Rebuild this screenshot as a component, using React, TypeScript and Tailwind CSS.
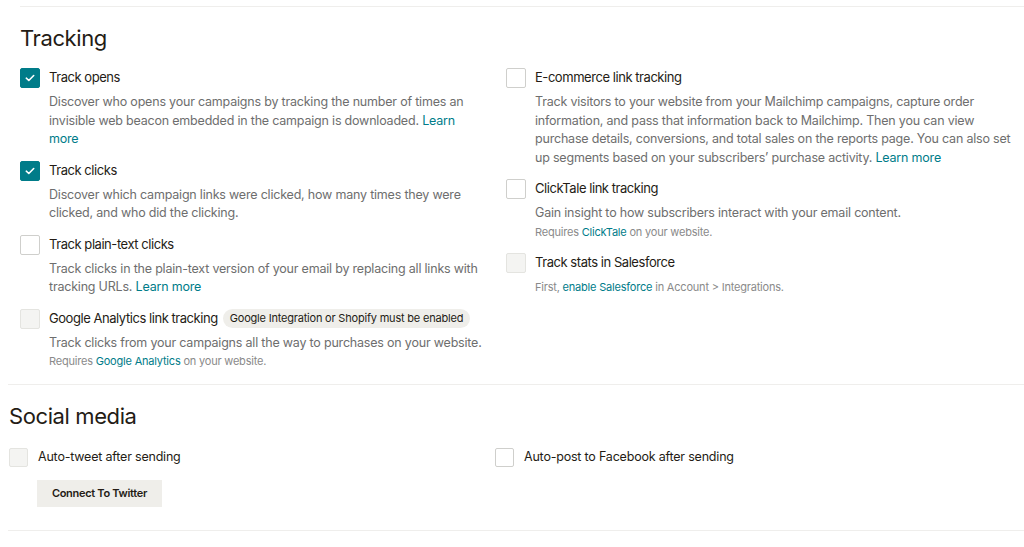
import React from "react";

type Box = "checked" | "empty" | "disabled";

function Checkbox({ state, size = 20 }: { state: Box; size?: number }) {
  const base =
    state === "checked"
      ? "bg-[#007c89] border-[#007c89]"
      : state === "disabled"
      ? "bg-[#f4f4f2] border-[#e4e4e0]"
      : "bg-white border-[#cfcfcc]";
  return (
    <div
      className={`shrink-0 rounded-[2px] border flex items-center justify-center ${base} ${
        size === 20 ? "w-[20px] h-[20px]" : "w-[19px] h-[19px]"
      }`}
    >
      {state === "checked" && (
        <svg width="10" height="8" viewBox="0 0 10 8" fill="none">
          <path d="M1.3 4.2 L3.8 6.5 L8.7 1.5" stroke="white" strokeWidth="1.6" strokeLinecap="round" strokeLinejoin="round" />
        </svg>
      )}
    </div>
  );
}

const link = "text-[#007c89]";

function Item({
  state,
  label,
  badge,
  children,
  small,
}: {
  state: Box;
  label: string;
  badge?: string;
  children?: React.ReactNode;
  small?: React.ReactNode;
}) {
  return (
    <div className="mb-[12px]">
      <div className="flex items-center h-[20px]">
        <Checkbox state={state} />
        <span className="ml-[9px] text-[13px] tracking-[-0.45px] text-[#241c15] whitespace-nowrap">{label}</span>
        {badge && (
          <span className="ml-[5px] h-[19px] px-[7px] rounded-full bg-[#efeeea] text-[11px] tracking-[-0.2px] text-[#241c15] flex items-center whitespace-nowrap">
            {badge}
          </span>
        )}
      </div>
      <div className="pl-[29px] mt-[5px]">
        {children && (
          <p className="text-[12.5px] tracking-[-0.2px] leading-[18.5px] text-[#6e6e6e]">{children}</p>
        )}
        {small && <p className="text-[11px] tracking-[-0.2px] leading-[18px] text-[#8a8a8a]">{small}</p>}
      </div>
    </div>
  );
}

export default function App() {
  return (
    <div
      className="w-[1024px] h-[547px] bg-white overflow-hidden"
      style={{ fontFamily: "Inter, 'Open Sans', sans-serif" }}
    >
      <div className="ml-[20px] pt-[6px]">
        <div className="border-t border-[#efeeec]" />
        <h2 className="mt-[15px] text-[22px] tracking-[-0.4px] leading-[32px] text-[#241c15]">Tracking</h2>
        <div className="mt-[14px] grid grid-cols-[486px_1fr]">
          <div className="pr-[20px]">
            <Item state="checked" label="Track opens">
              Discover who opens your campaigns by tracking the number of times an invisible web beacon embedded in the campaign is downloaded.{" "}
              <span className={link}>Learn more</span>
            </Item>
            <Item state="checked" label="Track clicks">
              Discover which campaign links were clicked, how many times they were clicked, and who did the clicking.
            </Item>
            <Item state="empty" label="Track plain-text clicks">
              Track clicks in the plain-text version of your email by replacing all links with tracking URLs.{" "}
              <span className={link}>Learn more</span>
            </Item>
            <Item
              state="disabled"
              label="Google Analytics link tracking"
              badge="Google Integration or Shopify must be enabled"
              small={
                <>
                  Requires <span className={link}>Google Analytics</span> on your website.
                </>
              }
            >
              Track clicks from your campaigns all the way to purchases on your website.
            </Item>
          </div>
          <div className="pr-[6px]">
            <Item state="empty" label="E-commerce link tracking">
              Track visitors to your website from your Mailchimp campaigns, capture order information, and pass that information back to Mailchimp. Then you can view purchase details, conversions, and total sales on the reports page. You can also set up segments based on your subscribers’ purchase activity.{" "}
              <span className={link}>Learn more</span>
            </Item>
            <Item
              state="empty"
              label="ClickTale link tracking"
              small={
                <>
                  Requires <span className={link}>ClickTale</span> on your website.
                </>
              }
            >
              Gain insight to how subscribers interact with your email content.
            </Item>
            <Item
              state="disabled"
              label="Track stats in Salesforce"
              small={
                <>
                  First, <span className={link}>enable Salesforce</span> in Account &gt; Integrations.
                </>
              }
            />
          </div>
        </div>
      </div>

      <div className="ml-[8px] mt-[2px] border-t border-[#efeeec]" />
      <div className="ml-[9px]">
        <h2 className="mt-[15px] text-[22px] tracking-[-0.4px] leading-[32px] text-[#241c15]">Social media</h2>
        <div className="mt-[16px] grid grid-cols-[486px_1fr]">
          <div>
            <div className="flex items-center h-[19px]">
              <Checkbox state="disabled" size={19} />
              <span className="ml-[10px] text-[12.5px] tracking-[-0.2px] text-[#241c15]">Auto-tweet after sending</span>
            </div>
            <button className="mt-[13px] ml-[28px] w-[125px] h-[27px] bg-[#efeeea] text-[11px] tracking-[-0.3px] font-semibold text-[#241c15]">
              Connect To Twitter
            </button>
          </div>
          <div>
            <div className="flex items-center h-[19px]">
              <Checkbox state="empty" size={19} />
              <span className="ml-[10px] text-[12.5px] tracking-[-0.2px] text-[#241c15]">
                Auto-post to Facebook after sending
              </span>
            </div>
          </div>
        </div>
      </div>
      <div className="ml-[8px] mt-[23px] border-t border-[#efeeec]" />
    </div>
  );
}
